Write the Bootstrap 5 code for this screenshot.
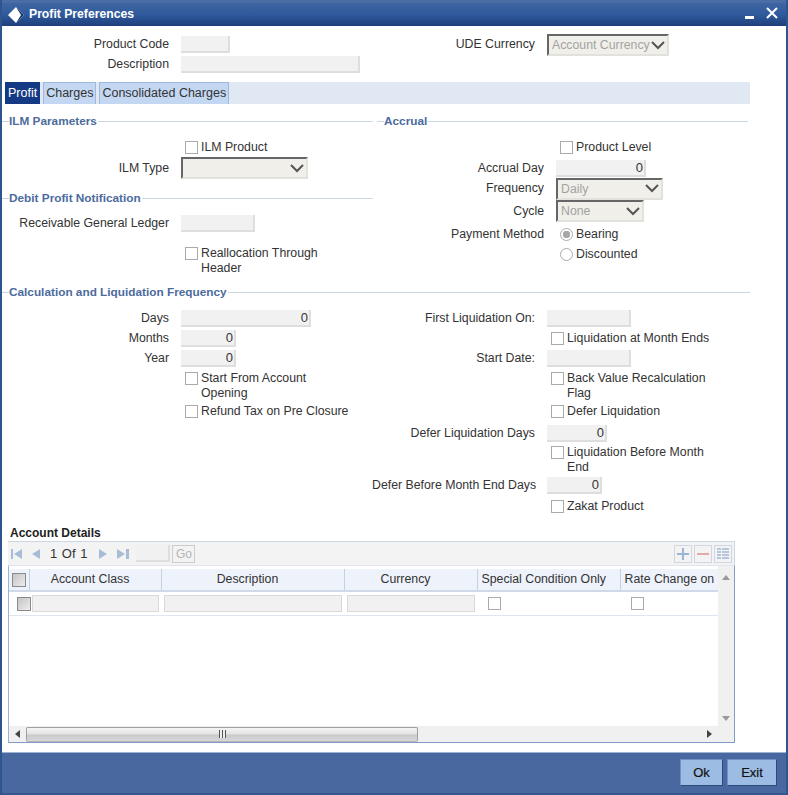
<!DOCTYPE html>
<html lang="en"><head><meta charset="utf-8"><title>Profit Preferences</title>
<link rel="stylesheet" href="https://cdn.jsdelivr.net/npm/bootstrap@5.3.0/dist/css/bootstrap.min.css">
<style>
html,body{height:795px;overflow:hidden;background:#fff}
body{font-family:"Liberation Sans",Arial,sans-serif;font-size:12.3px;color:#333;line-height:15px}
.win{width:788px;height:795px;border-left:2px solid #2f558f;border-right:2px solid #2f558f;background:#fff}
.ttl{height:26px;background:linear-gradient(#3f66a3,#2f5a9c 50%,#1f3f7c);border-top:3px solid #4a6da6;color:#fff;font-weight:700;font-size:12.2px;padding-left:5px}
.ttl svg{display:block}
.ttx{margin-left:4px}
.wbtns{margin-left:auto;padding-right:1px}
.top{height:56px;padding-top:8px}
.topl{width:358px;flex:none}
.topr{width:175px;flex:none;height:20px}
.lbl{text-align:right;flex:none}
.w167{width:167px}
.ctl{margin-left:12px}
.fld{display:block;height:17px;background:#f1f1f1;border:0;border-right:2px solid #dedede;border-bottom:2px solid #dedede;flex:none;padding:0 1px 0 0;text-align:right;font:13px/15px "Liberation Sans",sans-serif;color:#333}
.fld:disabled{color:#333;opacity:1}
.f49{width:49px}.f179{width:179px}.f74{width:74px}.f130{width:130px}.f55{width:55px}.f84{width:84px}.f60{width:60px}.f90{width:90px}
.sel{display:block;flex:none;height:22px;padding:0 0 0 3px;border-style:solid;border-width:2px;border-color:#666 #e2e2dc #e2e2dc #666;border-radius:0;background:#f1efe9;color:#a3a3a3;font:12.3px/18px "Liberation Sans",sans-serif;appearance:none;background-image:url("data:image/svg+xml,%3Csvg xmlns='http://www.w3.org/2000/svg' width='14' height='9'%3E%3Cpath d='M1 1l6 6 6-6' fill='none' stroke='%23555' stroke-width='2'/%3E%3C/svg%3E");background-repeat:no-repeat;background-position:right 2px center}
.sel:disabled{opacity:1}
.s122{width:122px}.s127{width:127px}.s107{width:107px}.s88{width:88px}
.tabband{height:22px;width:745px;margin-left:3px;background:#e0e8f4;gap:3px}
.tb{height:22px;padding:0 2px;background:#c3d7f2;border:1px solid #9fb9dc;border-bottom:0;color:#333;font-size:12.5px;line-height:21px;display:block}
.tb.on{background:#143a85;border-color:#143a85;color:#fff}
.hd{height:18px;color:#4c6b9e;font-weight:700;font-size:11.8px}
.hd::before{content:"";width:7px;border-top:1px solid #ccd6e3}
.hd::after{content:"";flex:1;border-top:1px solid #ccd6e3;margin-left:1px}
.hl{width:371px}
.hr{width:371px}
.hc{width:748px}
.cb{appearance:none;display:block;width:13px;height:13px;flex:none;background:#fff;border:1px solid #aaa;margin:0 3px 0 0}
.rd{appearance:none;display:block;width:13px;height:13px;flex:none;border:1px solid #aaa;border-radius:50%;background:#fff;margin:0 3px 0 0}
.rd.chk{background:radial-gradient(circle,#a8a8a8 0,#a8a8a8 3.5px,#fff 4px)}
.r20{height:20px}.r22{height:22px}.r18{height:18px}.r21{height:21px}.r30{height:30px}
.il183{padding-left:183px}
.il2{padding-left:179px}
.m1{margin-top:1px}.m2{margin-top:2px}.m3{margin-top:3px}.m7{margin-top:7px}.m8{margin-top:8px}.m10{margin-top:10px}.m14{margin-top:14px}
.colL{width:375px;flex:none}
.colL2{width:370px;flex:none}
.colR{width:371px;flex:none}
.w2l{width:150px}
.w2r{width:163px}
.wl{white-space:nowrap}
.w2r2{width:145px}
.acc{height:15px;font-weight:700;color:#222;font-size:12px;padding-left:8px;margin-top:10px}
.grid{margin-left:6px;width:727px}
.gbar{height:24px;background:#f3f3f3;border-top:1px solid #cdd7e4;border-right:1px solid #cdd7e4;padding-left:2px}
.gbar .pg{font-size:13px;margin:0 10px 0 8px;color:#333;word-spacing:1px}
.gin{width:34px;height:17px;background:#f1f1f1;border-right:2px solid #dedede;border-bottom:2px solid #dedede;margin-left:5px}
.gbtn{width:23px;height:18px;background:#f3f3f3;border:1px solid #ccc;color:#b5b5b5;font-size:12px;line-height:16px;text-align:center;margin-left:2px}
.tools{margin-left:auto;gap:2px;padding-right:2px}
.tools svg{display:block}
.gfr{height:178px;border:1px solid #7f9dc6;border-left-color:#9db3d2;border-top-color:#dfe6f0;padding-top:2px;position:relative;background:#fff}
.gtbl{width:709px;table-layout:fixed;margin:1px 0 0;border-collapse:collapse}
.gtbl th{height:22px;padding:0 10px 0 0;background:#eef2fb;border-right:1px solid #c4d1e4;border-bottom:2px solid #cfd9e8;font-weight:400;text-align:center;font-size:12.3px;color:#333;white-space:nowrap;overflow:hidden;vertical-align:middle}
.gtbl th.thl{text-align:left;padding:0 0 0 4px}
.gtbl td{height:24px;padding:0;border-bottom:1px solid #dfe5ee;vertical-align:middle;background:#fff}
.c0{width:20px}.c1{width:132px}.c2{width:183px}.c3{width:133px}.c4{width:143px}.c5{width:98px}
.cin{display:block;height:17px;background:#f1f1f1;border:1px solid #dadada;margin:0 2px 0 3px}
.cb-g{width:14px;height:14px;display:block;background:linear-gradient(135deg,#c4c4c4,#ededed);border:1px solid #8a8a8a}
.cb-t{margin-left:3px}
.cb-b{margin:1px 0 0 8px;position:relative}
.cbc{margin-left:11px}
.sbv{position:absolute;top:0;right:0;width:16px;height:161px;background:#f0f0f0;display:flex;flex-direction:column;align-items:center;justify-content:space-between;padding:9px 0 6px;z-index:1}
.sbh{position:absolute;left:0;right:0;bottom:0;height:16px;background:#f0f0f0;display:flex;align-items:center}
.sbh .arr{width:17px;flex:none;display:flex;justify-content:center}
.sbh .arrR{margin-right:16px}
.thumb{width:392px;height:15px;background:linear-gradient(#f4f4f4,#e4e4e4 45%,#c9c9c9 55%,#d8d8d8);border:1px solid #a0a0a0;border-bottom-color:#b5b5b5;border-radius:2px;display:flex;align-items:center;justify-content:center;flex:none}
.grip{width:7px;height:8px;background:repeating-linear-gradient(90deg,#555 0,#555 1px,#eee 1px,#eee 3px)}
.foot{position:absolute;left:0;right:0;top:752px;height:43px;background:#48689f;border-top:1px solid #9db3d3;border-bottom:2px solid #37578f;padding-right:9px;gap:4px;padding-top:6px}
.fb{height:27px;background:#9cbce4;border:1px solid #6f90c0;border-right-color:#2d4a7d;border-bottom-color:#2d4a7d;color:#111;font-size:13px;font-weight:400;line-height:24px;border-radius:0;padding:0;-webkit-text-stroke:.2px #111}
.b43{width:43px}.b50{width:50px}
</style></head>
<body>
<div class="win position-relative">
  <div class="ttl d-flex align-items-center">
    <svg width="18" height="18" viewBox="0 0 18 18"><path d="M9 1l8 8-8 8-8-8z" fill="#fff"/><path d="M9 1l8 8-8 8 5-8z" fill="#1c3a74"/></svg>
    <span class="ttx">Profit Preferences</span>
    <div class="wbtns d-flex align-items-center">
      <svg width="44" height="18" viewBox="0 0 44 18"><path d="M4 10h9v3H4z" fill="#fff"/><path d="M26 2l10 10M36 2L26 12" stroke="#fff" stroke-width="2" fill="none"/></svg>
    </div>
  </div>

  <div class="top d-flex">
    <div class="topl d-flex flex-column">
      <div class="d-flex align-items-center r20"><div class="lbl w167">Product Code</div><input class="fld f49 ctl" disabled></div>
      <div class="d-flex align-items-center r20"><div class="lbl w167">Description</div><input class="fld f179 ctl" disabled></div>
    </div>
    <div class="topr d-flex align-items-center justify-content-end">UDE Currency</div>
    <select class="sel s122 ctl" disabled><option>Account Currency</option></select>
  </div>

  <div class="tabband d-flex">
    <a class="tb on text-decoration-none">Profit</a>
    <a class="tb text-decoration-none">Charges</a>
    <a class="tb text-decoration-none">Consolidated Charges</a>
  </div>

  <div class="d-flex m8">
    <div class="colL">
      <div class="hd hl d-flex align-items-center"><span>ILM Parameters</span></div>
      <div class="r20 m7 d-flex align-items-center il183"><input type="checkbox" class="cb" disabled><span>ILM Product</span></div>
      <div class="r22 d-flex align-items-center"><div class="lbl w167">ILM Type</div><select class="sel s127 ctl" disabled><option></option></select></div>
      <div class="hd hl m10 d-flex align-items-center"><span>Debit Profit Notification</span></div>
      <div class="r18 m7 d-flex align-items-center"><div class="lbl w167">Receivable General Ledger</div><input class="fld f74 ctl" disabled></div>
      <div class="r30 m14 d-flex align-items-start il183"><input type="checkbox" class="cb m1" disabled><span class="w2l">Reallocation Through Header</span></div>
    </div>
    <div class="colR">
      <div class="hd hr d-flex align-items-center"><span>Accrual</span></div>
      <div class="r20 m7 d-flex align-items-center il183"><input type="checkbox" class="cb" disabled><span>Product Level</span></div>
      <div class="r20 m1 d-flex align-items-center"><div class="lbl w167">Accrual Day</div><input class="fld f90 ctl" value="0" disabled></div>
      <div class="r21 d-flex align-items-center"><div class="lbl w167">Frequency</div><select class="sel s107 ctl" disabled><option>Daily</option></select></div>
      <div class="r22 m1 d-flex align-items-center"><div class="lbl w167">Cycle</div><select class="sel s88 ctl" disabled><option>None</option></select></div>
      <div class="r20 m2 d-flex align-items-center"><div class="lbl w167">Payment Method</div><input type="radio" class="rd chk ms-3" disabled checked><span>Bearing</span></div>
      <div class="r20 d-flex align-items-center il183"><input type="radio" class="rd" disabled><span>Discounted</span></div>
    </div>
  </div>

  <div class="hd hc m7 d-flex align-items-center"><span>Calculation and Liquidation Frequency</span></div>

  <div class="d-flex m7">
    <div class="colL2">
      <div class="r20 d-flex align-items-center"><div class="lbl w167">Days</div><input class="fld f130 ctl" value="0" disabled></div>
      <div class="r20 d-flex align-items-center"><div class="lbl w167">Months</div><input class="fld f55 ctl" value="0" disabled></div>
      <div class="r20 d-flex align-items-center"><div class="lbl w167">Year</div><input class="fld f55 ctl" value="0" disabled></div>
      <div class="r30 m3 d-flex align-items-start il183"><input type="checkbox" class="cb m1" disabled><span class="w2l">Start From Account Opening</span></div>
      <div class="r20 d-flex align-items-center il183"><input type="checkbox" class="cb" disabled><span>Refund Tax on Pre Closure</span></div>
    </div>
    <div class="colR">
      <div class="r20 d-flex align-items-center"><div class="lbl w2r wl">First Liquidation On:</div><input class="fld f84 ctl" disabled></div>
      <div class="r20 d-flex align-items-center il2"><input type="checkbox" class="cb" disabled><span>Liquidation at Month Ends</span></div>
      <div class="r20 d-flex align-items-center"><div class="lbl w2r wl">Start Date:</div><input class="fld f84 ctl" disabled></div>
      <div class="r30 m3 d-flex align-items-start il2"><input type="checkbox" class="cb m1" disabled><span class="w2r2">Back Value Recalculation Flag</span></div>
      <div class="r20 d-flex align-items-center il2"><input type="checkbox" class="cb" disabled><span>Defer Liquidation</span></div>
      <div class="r20 m2 d-flex align-items-center"><div class="lbl w2r wl">Defer Liquidation Days</div><input class="fld f60 ctl" value="0" disabled></div>
      <div class="r30 m2 d-flex align-items-start il2"><input type="checkbox" class="cb m1" disabled><span class="w2r2">Liquidation Before Month End</span></div>
      <div class="r20 d-flex align-items-center"><div class="lbl w2r wl">Defer Before Month End Days</div><input class="fld f55 ctl" value="0" disabled></div>
      <div class="r20 m1 d-flex align-items-center il2"><input type="checkbox" class="cb" disabled><span>Zakat Product</span></div>
    </div>
  </div>

  <div class="acc">Account Details</div>
  <div class="grid">
    <div class="gbar d-flex align-items-center">
      <svg width="32" height="12" viewBox="0 0 32 12"><path d="M1 1h2v10H1zM12 1v10L4 6zM30 1v10l-8-5z" fill="#a9bcd6"/></svg>
      <span class="pg">1 Of 1</span>
      <svg width="34" height="12" viewBox="0 0 34 12"><path d="M2 1v10l8-5zM20 1v10l8-5zM29 1h3v10h-3z" fill="#a9bcd6"/></svg>
      <div class="gin"></div><div class="gbtn">Go</div>
      <div class="tools d-flex">
        <svg width="18" height="18" viewBox="0 0 18 18"><rect x=".5" y=".5" width="17" height="17" fill="#f3f3f3" stroke="#cfd7e3"/><path d="M9 3v12M3 9h12" stroke="#9db4d6" stroke-width="2"/></svg>
        <svg width="18" height="18" viewBox="0 0 18 18"><rect x=".5" y=".5" width="17" height="17" fill="#f3f3f3" stroke="#cfd7e3"/><path d="M3 9h12" stroke="#e3a8a8" stroke-width="2"/></svg>
        <svg width="18" height="18" viewBox="0 0 18 18"><rect x=".5" y=".5" width="17" height="17" fill="#f3f3f3" stroke="#cfd7e3"/><path d="M3 4h4M3 7h4M3 10h4M3 13h4M8 4h7M8 7h7M8 10h7M8 13h7" stroke="#b5c6de" stroke-width="2"/></svg>
      </div>
    </div>
    <div class="gfr">
      <table class="gtbl">
        <thead><tr>
          <th class="c0"><span class="cb-g cb-t"></span></th><th class="c1">Account Class</th><th class="c2">Description</th><th class="c3">Currency</th><th class="c4 thl">Special Condition Only</th><th class="c5 thl">Rate Change on</th>
        </tr></thead>
        <tbody><tr>
          <td><span class="cb-g cb-b"></span></td><td><span class="cin"></span></td><td><span class="cin"></span></td><td><span class="cin"></span></td><td><input type="checkbox" class="cb cbc" disabled></td><td><input type="checkbox" class="cb cbc" disabled></td>
        </tr></tbody>
      </table>
      <div class="sbv">
        <svg width="8" height="5" viewBox="0 0 8 5"><path d="M0 5l4-5 4 5z" fill="#9a9a9a"/></svg>
        <svg width="8" height="5" viewBox="0 0 8 5"><path d="M0 0l4 5 4-5z" fill="#9a9a9a"/></svg>
      </div>
      <div class="sbh">
        <span class="arr"><svg width="5" height="8" viewBox="0 0 5 8"><path d="M5 0L0 4l5 4z" fill="#444"/></svg></span>
        <div class="thumb"><span class="grip"></span></div>
        <span class="ms-auto arr arrR"><svg width="5" height="8" viewBox="0 0 5 8"><path d="M0 0l5 4-5 4z" fill="#444"/></svg></span>
      </div>
    </div>
  </div>

  <div class="foot d-flex justify-content-end align-items-start">
    <button class="btn fb b43">Ok</button>
    <button class="btn fb b50">Exit</button>
  </div>
</div>
</body></html>
